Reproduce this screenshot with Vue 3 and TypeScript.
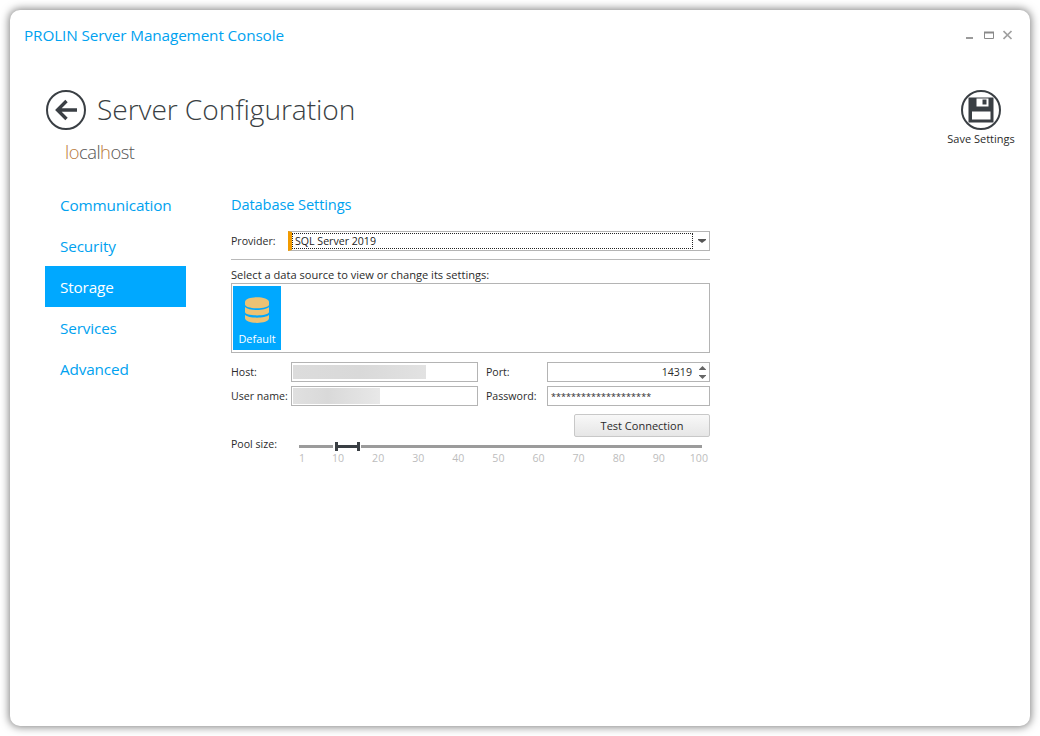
<script setup lang="ts">
const navItems: string[] = ['Communication', 'Security', 'Storage', 'Services', 'Advanced']
const ticks: number[] = [1, 10, 20, 30, 40, 50, 60, 70, 80, 90, 100]
</script>

<template>
  <div class="page">
    <div class="window">
      <header class="titlebar">
        <span class="app-title">PROLIN Server Management Console</span>
        <div class="win-controls">
          <svg width="10" height="10" viewBox="0 0 10 10"><rect x="0" y="7" width="7" height="2" fill="#9a9a9a" /></svg>
          <svg width="11" height="10" viewBox="0 0 11 10"><path d="M0.500 2.500h9v6h-9z" fill="none" stroke="#8a8a8a" /><path d="M0 2.500h10" stroke="#8a8a8a" stroke-width="2" /></svg>
          <svg width="10" height="10" viewBox="0 0 10 10"><path d="M0.500 1l8 8M8.500 1l-8 8" stroke="#a0a0a0" stroke-width="1.700" /></svg>
        </div>
      </header>

      <section class="heading">
        <div class="heading-left">
          <div class="heading-main">
            <svg class="round-icon" width="40" height="40" viewBox="0 0 40 40">
              <circle cx="20" cy="20" r="19" fill="none" stroke="#3a3f44" stroke-width="2" />
              <path d="M31 20H12.500M20.500 11L11.500 20l9 9" fill="none" stroke="#3a3f44" stroke-width="3.400" />
            </svg>
            <h1>Server Configuration</h1>
          </div>
          <div class="host"><span class="o">lo</span><span class="g">cal</span><span class="o">h</span><span class="g">ost</span></div>
        </div>
        <div class="save">
          <svg class="round-icon" width="40" height="40" viewBox="0 0 40 40">
            <circle cx="20" cy="20" r="19" fill="none" stroke="#3a3f44" stroke-width="2" />
            <path fill-rule="evenodd" d="M7.500 7.500h25v25h-25zM15.500 8.500v8h12v-8zM11 21.500v8h18.500v-8z" fill="#3a3f44" />
            <path d="M21.500 9.500h4v5h-4z" fill="#3a3f44" />
          </svg>
          <span>Save Settings</span>
        </div>
      </section>

      <div class="content">
        <nav class="nav">
          <a v-for="item in navItems" :key="item" class="nav-item" :class="{ active: item === 'Storage' }">{{ item }}</a>
        </nav>

        <main class="form">
          <h2>Database Settings</h2>

          <div class="provider-row">
            <label>Provider:</label>
            <div class="combo">
              <div class="combo-value"><span>SQL Server 2019</span></div>
              <svg class="combo-arrow" width="8" height="4" viewBox="0 0 8 4"><path d="M0 0h8v1L4 4 0 1z" fill="#555" /></svg>
            </div>
          </div>

          <div class="divider"></div>

          <div class="list-label">Select a data source to view or change its settings:</div>
          <div class="listbox">
            <div class="tile">
              <svg width="24" height="26" viewBox="0 0 24 26">
                <path d="M0 5c0-6.500 24-6.500 24 0v2.500c0 5-24 5-24 0z" fill="#ecc274" />
                <path d="M0 10c4 4 20 4 24 0v5c0 4.500-24 4.500-24 0z" fill="#ecc274" />
                <path d="M0 18c4 3.500 20 3.500 24 0v3c0 6.500-24 6.500-24 0z" fill="#ecc274" />
              </svg>
              <span>Default</span>
            </div>
          </div>

          <div class="fields">
            <label>Host:</label>
            <div class="input"><i class="blur host-blur"></i></div>
            <label class="second">Port:</label>
            <div class="input number">
              <span>14319</span>
              <div class="spin">
                <svg width="7" height="4" viewBox="0 0 7 4"><path d="M3.500 0L7 3.500V4H0v-.5z" fill="#666" /></svg>
                <svg width="7" height="4" viewBox="0 0 7 4"><path d="M0 0h7v.5L3.500 4 0 .5z" fill="#666" /></svg>
              </div>
            </div>
            <label>User name:</label>
            <div class="input"><i class="blur user-blur"></i></div>
            <label class="second">Password:</label>
            <div class="input password">********************</div>
          </div>

          <div class="button-row">
            <button type="button" class="test-btn">Test Connection</button>
          </div>

          <div class="pool">
            <label>Pool size:</label>
            <div class="slider">
              <div class="track">
                <span class="seg seg-a"></span>
                <span class="range"></span>
                <span class="seg seg-b"></span>
              </div>
              <div class="ticks">
                <span v-for="t in ticks" :key="t">{{ t }}</span>
              </div>
            </div>
          </div>
        </main>
      </div>
    </div>
  </div>
</template>

<style>
html, body { margin: 0; background: #fff; }
</style>

<style scoped>
.page {
  width: 1040px;
  height: 736px;
  padding: 10px;
  box-sizing: border-box;
  background: #fff;
  font-family: "Open Sans", "Noto Sans", sans-serif;
  color: #2b2b2b;
  overflow: hidden;
}
.window {
  width: 1020px;
  height: 716px;
  background: #fff;
  border-radius: 10px;
  box-shadow: 0 0 9px 1px rgba(0, 0, 0, 0.5);
  box-sizing: border-box;
  padding: 0 15px 0 14px;
  display: flex;
  flex-direction: column;
}
.titlebar {
  height: 50px;
  display: flex;
  align-items: center;
  justify-content: space-between;
  flex: none;
}
.app-title {
  font-size: 15.3px;
  color: #00a2f0;
  letter-spacing: -0.12px;
}
.win-controls {
  display: flex;
  gap: 8px;
  align-items: center;
  margin-right: 2px;
}
.win-controls svg { display: block; }
.heading {
  height: 121px;
  padding: 29px 0 0 22px;
  box-sizing: border-box;
  display: flex;
  justify-content: space-between;
  flex: none;
}
.heading-main {
  display: flex;
  align-items: center;
  gap: 11px;
  height: 42px;
}
.round-icon { display: block; }
h1 {
  margin: 0 0 2px;
  font-weight: 300;
  font-size: 28.2px;
  line-height: 40px;
  color: #3a3f44;
  letter-spacing: -0.1px;
}
.host {
  margin: 9px 0 0 19px;
  font-size: 18.4px;
  font-weight: 300;
  line-height: 24px;
  letter-spacing: -0.5px;
}
.host .o { color: #b9793a; }
.host .g { color: #555; }
.save {
  width: 70px;
  display: flex;
  flex-direction: column;
  align-items: center;
  margin: 1px -1px 0 0;
  font-size: 11px;
  white-space: nowrap;
}
.save span { margin-top: 1px; line-height: 15px; }
.content {
  display: flex;
  flex: 1;
  min-height: 0;
}
.nav {
  width: 141px;
  margin-left: 21px;
  margin-top: 3px;
  flex: none;
  display: flex;
  flex-direction: column;
}
.nav-item {
  height: 41px;
  display: flex;
  align-items: center;
  padding-left: 15px;
  font-size: 15.3px;
  color: #00a2f0;
  letter-spacing: -0.15px;
}
.nav-item.active {
  background: #00a8ff;
  color: #fff;
}
.form {
  width: 479px;
  margin-left: 45px;
  font-size: 10.6px;
}
h2 {
  margin: 0;
  padding-top: 13px;
  height: 50px;
  box-sizing: border-box;
  font-size: 14.6px;
  line-height: 20px;
  font-weight: 400;
  color: #00a2f0;
  letter-spacing: -0.1px;
}
label { white-space: nowrap; }
.provider-row {
  display: flex;
  align-items: center;
  height: 20px;
}
.provider-row label { width: 57px; flex: none; padding-bottom: 1px; }
.combo {
  flex: 1;
  height: 20px;
  box-sizing: border-box;
  border: 1px solid #b4b4b4;
  border-left: 4px solid #f29b00;
  padding: 1px 0 1px 0;
  display: flex;
  align-items: center;
}
.combo-value {
  flex: 1;
  height: 16px;
  box-sizing: border-box;
  border: 1px dotted #222;
  display: flex;
  align-items: center;
  padding: 0 0 1px 2px;
  color: #222;
}
.combo-arrow { margin: 0 3px 0 5px; flex: none; }
.divider {
  height: 1px;
  background: #b9b9b9;
  margin-top: 8px;
}
.list-label {
  margin-top: 7px;
  line-height: 15px;
  height: 16px;
  font-size: 11.1px;
}
.listbox {
  height: 70px;
  box-sizing: border-box;
  border: 1px solid #b4b4b4;
  padding: 2px 1px;
}
.tile {
  width: 48px;
  height: 64px;
  background: #00a8ff;
  color: #fff;
  display: flex;
  flex-direction: column;
  align-items: center;
  padding-top: 11px;
  box-sizing: border-box;
  font-size: 10.9px;
}
.tile span { margin-top: 9px; line-height: 14px; }
.tile svg { display: block; flex: none; }
.fields {
  display: grid;
  grid-template-columns: 60px 187px 69px 163px;
  grid-auto-rows: 20px;
  row-gap: 4px;
  margin-top: 9px;
  align-items: center;
}
.second { padding-left: 8px; }
.input {
  height: 20px;
  box-sizing: border-box;
  border: 1px solid #b4b4b4;
  padding: 3px 1px;
  display: flex;
  align-items: center;
}
.blur { display: block; height: 14px; }
.host-blur { width: 133px; background: linear-gradient(90deg, #dcdcdc, #d9d9d9 50%, #e2e2e2); }
.user-blur { width: 87px; height: 16px; background: linear-gradient(90deg, #e0e0e0, #d9d9d9 40%, #e8e8e8); }
.number { justify-content: flex-end; padding-right: 3px; }
.spin {
  display: flex;
  flex-direction: column;
  gap: 5px;
  margin-left: 7px;
}
.spin svg { display: block; }
.password { padding-left: 3px; font-size: 9px; letter-spacing: 0.05px; }
.button-row {
  display: flex;
  justify-content: flex-end;
  margin-top: 8px;
}
.test-btn {
  width: 136px;
  height: 23px;
  border: 1px solid #c8c8c8;
  border-radius: 2px;
  background: linear-gradient(#f8f8f8, #e6e6e6);
  font: inherit;
  font-size: 11px;
  color: inherit;
  padding: 0;
}
.pool { display: flex; }
.pool label { width: 68px; flex: none; line-height: 14px; }
.slider {
  width: 411px;
  flex: none;
  margin-top: 8px;
}
.track {
  width: 403px;
  height: 3px;
  display: flex;
  align-items: center;
}
.seg { height: 3px; background: #9b9b9b; display: block; }
.seg-a { width: 34px; }
.seg-b { flex: 1; margin-left: 1px; }
.range {
  width: 25px;
  height: 3px;
  background: #3a3f44;
  margin-left: 2px;
  position: relative;
}
.range::before, .range::after {
  content: "";
  position: absolute;
  top: -3px;
  width: 3px;
  height: 9px;
  background: #3a3f44;
}
.range::before { left: 0; }
.range::after { right: 0; }
.ticks {
  display: flex;
  margin-top: 3px;
  color: #bdbdbd;
  line-height: 14px;
}
.ticks span {
  flex: none;
  width: 40.1px;
  text-align: center;
}
.ticks span:first-child {
  width: 6px;
  margin-right: 13px;
}
</style>
